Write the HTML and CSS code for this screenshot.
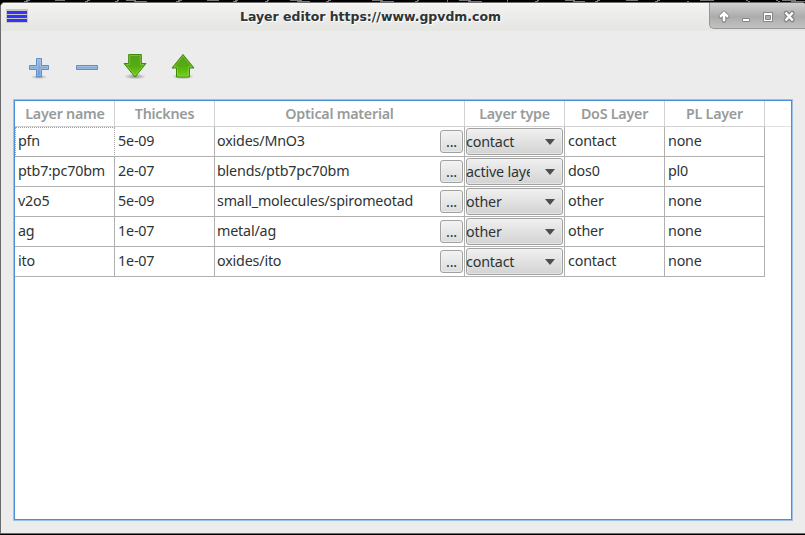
FILE: index.html
```
<!DOCTYPE html>
<html lang="en">
<head>
<meta charset="utf-8">
<title>Layer editor</title>
<link rel="stylesheet" href="styles.css">
</head>
<body>
<svg class="desktop" width="805" height="2" viewBox="0 0 805 2" shape-rendering="crispEdges"><path d="M26 0.5h4M24 1.5h4M55 0.5h10M87 0.5h3M85 1.5h3M117 0.5h2M115 1.5h3M126 0.5h10M134 1.5h13M178 0.5h4M176 1.5h4M207 0.5h12M235 0.5h3M233 1.5h4M267 0.5h2M265 1.5h3M290 0.5h12M297 1.5h13M328 0.5h3M326 1.5h3M372 0.5h11M380 1.5h14M417 0.5h2M415 1.5h3M447 0.5h1M447 1.5h1M459 0.5h12M468 1.5h14M507 0.5h1M507 1.5h1M537 0.5h2M535 1.5h3M565 0.5h10M573 1.5h12M597 0.5h3M595 1.5h3M626 0.5h12M657 0.5h3M655 1.5h3M700 0.5h14M687 1.5h2M746 0.5h2M748 1.5h2M776 0.5h2M778 1.5h2M782 0.5h14M791 1.5h14"/></svg>
<div class="window">
  <header class="titlebar">
    <svg class="app" width="22" height="14" viewBox="0 0 22 14" shape-rendering="crispEdges"><path fill="#c9c6bd" d="M0 0h22v14H0z"/><path fill="#3333ff" d="M1 2h20v3H1zM1 6h20v3H1zM1 10h20v3H1z"/></svg>
    <h1>Layer editor https://www.gpvdm.com</h1>
    <div class="controls">
      <svg width="96" height="25" viewBox="0 0 96 25">
        <g fill="none" stroke="#858585" stroke-linejoin="round" stroke-linecap="round"><path stroke-width="4.6" d="M15 17.5V11M11.8 13.3 15 10.2l3.2 3.1"/><path stroke-width="5" d="m77.2 10.2 6 6.6m0-6.6-6 6.6"/></g>
        <g fill="none" stroke="#fff" stroke-width="2.4"><path d="M15 18.3V11M11 13.8 15 10l4 3.8"/><path d="m76.5 9.5 7.3 8m0-8-7.3 8"/></g>
        <path fill="#fff" stroke="#858585" d="M33.500 15.500h7v3h-7z"/>
        <path fill="#fff" fill-rule="evenodd" stroke="#858585" d="M54.500 9.500h9v9h-9zM56.500 12.500h5v4h-5z"/>
      </svg>
    </div>
  </header>
  <nav class="toolbar">
    <svg width="24" height="30" viewBox="0 0 24 30"><ellipse cx="12" cy="23" rx="8" ry="2" fill="url(#shade)"/><path fill="url(#blue)" stroke="#5f8fc6" d="M9.500 4.500h5v7h7v4h-7v7h-5v-7h-7v-4h7z"/><path fill="none" stroke="#b9d0ec" stroke-opacity=".4" d="M10.500 21.500v-7h-7v-2h7v-7h3v7h7v2h-7v7z"/></svg>
    <svg width="24" height="30" viewBox="0 0 24 30"><path fill="url(#blue)" stroke="#5f8fc6" d="M1.500 11.500h21v4h-21z"/><path fill="none" stroke="#b9d0ec" stroke-opacity=".4" d="M2.500 12.500h19v2h-19z"/></svg>
    <svg width="24" height="30" viewBox="0 0 24 30"><ellipse cx="12" cy="22.500" rx="11" ry="3" fill="url(#shade)"/><path fill="url(#green)" stroke="#3f8a08" d="M5.700 .5h12.600v9h4.700L12 23 1 9.500h4.700z"/><path fill="none" stroke="#a4e06b" stroke-opacity=".4" d="M6.700 1.500h10.600v9h3.500L12 21.400 3.200 10.500h3.500z"/></svg>
    <svg width="24" height="30" viewBox="0 0 24 30"><ellipse cx="12" cy="22.500" rx="11" ry="3" fill="url(#shade)"/><path fill="url(#green)" stroke="#3f8a08" d="M12 .5 23 14h-4.500v9h-13v-9H1z"/><path fill="none" stroke="#a4e06b" stroke-opacity=".4" d="m12 2.100 8.800 10.900h-3.300v9h-11v-9H3.200z"/></svg>
  </nav>
  <main class="table">
    <div class="row head"><span>Layer name</span><span>Thicknes</span><span>Optical material</span><span>Layer type</span><span>DoS Layer</span><span>PL Layer</span></div>
    <div class="row"><span class="focus">pfn</span><span>5e-09</span><span>oxides/MnO3<button>...</button></span><span class="pick"><button class="combo"><b>contact</b><i></i></button></span><span>contact</span><span>none</span></div>
    <div class="row"><span>ptb7:pc70bm</span><span>2e-07</span><span>blends/ptb7pc70bm<button>...</button></span><span class="pick"><button class="combo"><b>active layer</b><i></i></button></span><span>dos0</span><span>pl0</span></div>
    <div class="row"><span>v2o5</span><span>5e-09</span><span>small_molecules/spiromeotad<button>...</button></span><span class="pick"><button class="combo"><b>other</b><i></i></button></span><span>other</span><span>none</span></div>
    <div class="row"><span>ag</span><span>1e-07</span><span>metal/ag<button>...</button></span><span class="pick"><button class="combo"><b>other</b><i></i></button></span><span>other</span><span>none</span></div>
    <div class="row"><span>ito</span><span>1e-07</span><span>oxides/ito<button>...</button></span><span class="pick"><button class="combo"><b>contact</b><i></i></button></span><span>contact</span><span>none</span></div>
  </main>
</div>
<svg class="defs" width="0" height="0"><defs>
  <linearGradient id="blue" x2="0" y2="1"><stop stop-color="#9dbce0"/><stop offset="1" stop-color="#6b9bd2"/></linearGradient>
  <linearGradient id="green" x2="0" y2="1"><stop stop-color="#559f1b"/><stop offset=".5" stop-color="#55ab10"/><stop offset="1" stop-color="#73d216"/></linearGradient>
  <radialGradient id="shade"><stop stop-color="#000" stop-opacity=".4"/><stop offset="1" stop-color="#000" stop-opacity="0"/></radialGradient>
</defs></svg>
</body>
</html>
```
FILE: styles.css
```
* { box-sizing: border-box; }
body { margin: 0; width: 805px; height: 535px; overflow: hidden; background: #000; font: 14.3px/20px "Noto Sans", sans-serif; letter-spacing: -.18px; color: #2e3436; }
.desktop { display: block; stroke: #777; }
.defs { position: absolute; }
.window { height: 532px; border: 1px solid #6b6b6b; border-right: 0; border-top-color: #707070; border-radius: 5px 3px 0 0; background: #ececec; overflow: hidden; }
.titlebar { display: flex; height: 28px; padding-left: 5px; background: linear-gradient(#fafafa 0, #f1f1f0 2px, #e6e6e3 90%, #e7e7e4); }
.app { margin-top: 6px; }
h1 { flex: 1; margin: 0; padding-left: 212px; font: bold 12.500px/27px "DejaVu Sans", sans-serif; letter-spacing: -.02px; color: #2e3436; text-shadow: 1px 1px #fff; white-space: nowrap; }
.controls { width: 96px; height: 26px; border: solid #969696; border-width: 0 0 1px 1px; border-radius: 0 0 0 5px; background: linear-gradient(#d0d0d0, #acacac 55%, #c2c2c2); }
.controls svg { display: block; margin-left: -1px; }
.toolbar { display: flex; gap: 24px; padding: 23px 0 0 26px; height: 68px; }
.table { width: 780px; height: 422px; margin-left: 12px; border: 1px solid #9fc0e5; background: #fff; outline: 1px solid #4a90d9; outline-offset: -2px; padding: 1px; }
.row { display: grid; grid-template-columns: 100px 100px 250px 100px 100px 100px; height: 30px; }
.row > span { display: flex; justify-content: space-between; border: solid #b0b0b0; border-width: 0 1px 1px 0; padding: 4px 1px 0 3px; white-space: nowrap; }
.row > span:nth-child(3) { padding-left: 2px; }
.row.head { height: 26px; border-bottom: 1px solid #e2e2e2; color: #979b9b; font-weight: 600; letter-spacing: -.25px; }
.row.head > span { display: block; text-align: center; padding: 3px 0 0; border-color: #d2d2d2; height: 26px; }
.row.head > span:first-child { padding-left: 1px; }
.row > .focus { outline: 1px dotted #a0a0a0; outline-offset: -1px; border-color: #fff #fff #b0b0b0; }
button { margin: -1px 0 0; width: 23px; height: 23px; padding: 1px 0 0; border: 1px solid #a1a1a1; border-radius: 3px; background: linear-gradient(#f3f3f3, #dcdcdc); box-shadow: inset 0 0 0 1px #f5f5f580; font: inherit; letter-spacing: inherit; color: #2e3436; }
.row > .pick { padding: 1px 1px 0 1px; }
.combo { display: flex; width: 97px; height: 27px; margin: 0; padding: 3px 7px 0 0; justify-content: space-between; background: linear-gradient(#f0f0f0, #d3d3d3); }
.combo b { width: 64px; margin-left: -1px; overflow: hidden; text-align: left; font-weight: 400; }
.combo i { margin-top: 7px; border: solid transparent; border-width: 6px 5.500px 0; border-top-color: #4a5052; height: 0; }
```
